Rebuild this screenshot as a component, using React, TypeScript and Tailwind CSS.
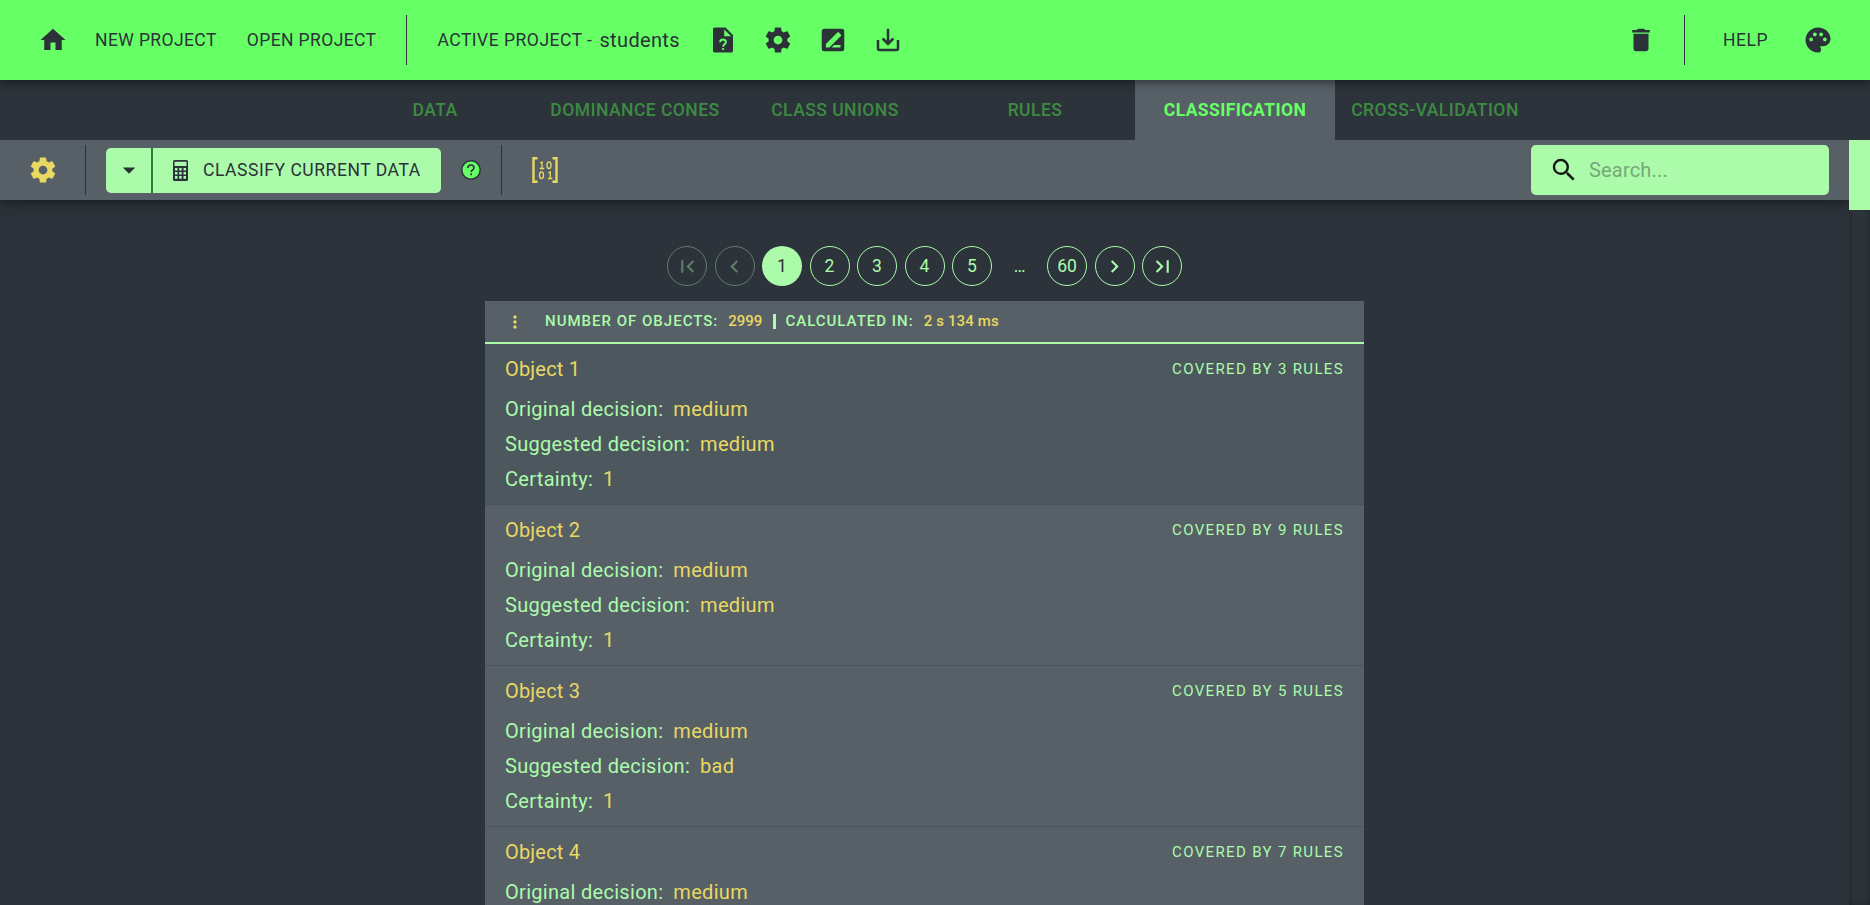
import React from "react";
import {
  MdHome,
  MdSaveAlt,
  MdDelete,
  MdPalette,
  MdSearch,
  MdArrowDropDown,
  MdMoreVert,
  MdNavigateBefore,
  MdNavigateNext,
  MdFirstPage,
  MdLastPage,
} from "react-icons/md";

const GEAR =
  "M19.43 12.98c.04-.32.07-.64.07-.98s-.03-.66-.07-.98l2.11-1.65c.19-.15.24-.42.12-.64l-2-3.46c-.12-.22-.39-.3-.61-.22l-2.49 1c-.52-.4-1.08-.73-1.69-.98l-.38-2.65C14.46 2.18 14.25 2 14 2h-4c-.25 0-.46.18-.49.42l-.38 2.65c-.61.25-1.17.59-1.69.98l-2.49-1c-.23-.09-.49 0-.61.22l-2 3.46c-.13.22-.07.49.12.64l2.11 1.65c-.04.32-.07.65-.07.98s.03.66.07.98l-2.11 1.65c-.19.15-.24.42-.12.64l2 3.46c.12.22.39.3.61.22l2.49-1c.52.4 1.08.73 1.69.98l.38 2.65c.03.24.24.42.49.42h4c.25 0 .46-.18.49-.42l.38-2.65c.61-.25 1.17-.59 1.69-.98l2.49 1c.23.09.49 0 .61-.22l2-3.46c.12-.22.07-.49-.12-.64l-2.11-1.65zM12 15.5c-1.93 0-3.5-1.57-3.5-3.5s1.57-3.5 3.5-3.5 3.5 1.57 3.5 3.5-1.57 3.5-3.5 3.5z";

function GearIcon() {
  return (
    <svg viewBox="0 0 24 24" className="size-[30px] shrink-0 fill-current">
      <path d={GEAR} />
    </svg>
  );
}

function FileQuestionIcon() {
  return (
    <svg viewBox="0 0 24 24" className="size-[30px] shrink-0 fill-current">
      <path
        fillRule="evenodd"
        d="M14 2H5.500C4.600 2 4 2.600 4 3.500v17c0 .9.6 1.500 1.500 1.500h13c.9 0 1.500-.6 1.500-1.500V8l-6-6zM13 3.500V9h5.500L13 3.500z"
      />
      <path
        d="M9.700 13.800c0-1.400 1-2.200 2.300-2.200s2.300.9 2.300 2.100c0 1.600-2.200 1.800-2.200 3.600M12.100 18.300v1.600"
        fill="none"
        stroke="#66ff66"
        strokeWidth="1.500"
      />
    </svg>
  );
}

function RenameIcon() {
  return (
    <svg viewBox="0 0 24 24" className="size-[30px] shrink-0 fill-current">
      <path
        fillRule="evenodd"
        d="M5 3h14a2 2 0 0 1 2 2v14a2 2 0 0 1-2 2H5a2 2 0 0 1-2-2V5c0-1.100.9-2 2-2zM6.300 15.200V18h2.800l8.200-8.200-2.800-2.800-8.200 8.200zM18.400 8.700c.3-.3.3-.7 0-1l-1.800-1.800c-.3-.3-.7-.3-1 0l-1.100 1.100 2.800 2.800 1.100-1.100zM18 16h-5.200l-2 2H18v-2z"
      />
    </svg>
  );
}

function CalculatorIcon() {
  return (
    <svg viewBox="0 0 15 21" className="h-[21px] w-[15px] shrink-0 fill-current">
      <path
        fillRule="evenodd"
        d="M1.500 0h12A1.500 1.500 0 0 1 15 1.500v18a1.500 1.500 0 0 1-1.500 1.500h-12A1.500 1.500 0 0 1 0 19.500v-18A1.500 1.500 0 0 1 1.500 0zM1.500 1.800v4.200h12V1.800zM2 8v2.500h2.500V8zM6.200 8v2.500h2.500V8zM10.500 8v2.500h2.500V8zM2 12v2.500h2.500V12zM6.200 12v2.500h2.500V12zM10.500 12v2.500h2.500V12zM2 16v2.700h2.500V16zM6.200 16v2.700h2.500V16zM10.500 16v2.700h2.500V16z"
      />
    </svg>
  );
}

function HelpBadge() {
  return (
    <svg viewBox="0 0 20 20" className="size-5 shrink-0">
      <circle cx="10" cy="10" r="9.200" fill="#66ff66" stroke="#2b3238" strokeWidth="1.400" />
      <path
        d="M7 7.900c0-1.800 1.300-2.900 3-2.900s3 1.100 3 2.700c0 2.100-2.800 2.200-2.800 4.300M10.200 13.300v1.900"
        fill="none"
        stroke="#2b3238"
        strokeWidth="1.600"
      />
    </svg>
  );
}

function MatrixIcon() {
  return (
    <svg viewBox="0 0 26 26" className="size-[26px] shrink-0" fill="none" stroke="currentColor">
      <path d="M5.500 1.200H1.500V24.800H5.500M20.500 1.200H24.500V24.800H20.500" strokeWidth="2.400" />
      <path
        d="M8 6L10 5V11.500M7.800 11.500H12.200M16.300 15.800L18.300 15V21.500M16 21.500H20.400"
        strokeWidth="1.300"
      />
      <ellipse cx="17" cy="8.200" rx="2" ry="3.300" strokeWidth="1.300" />
      <ellipse cx="9.500" cy="18.200" rx="2" ry="3.300" strokeWidth="1.300" />
    </svg>
  );
}

const tabs = ["Data", "Dominance cones", "Class unions", "Rules", "Classification", "Cross-validation"];

const objects = [
  { id: 1, original: "medium", suggested: "medium", certainty: 1, rules: 3 },
  { id: 2, original: "medium", suggested: "medium", certainty: 1, rules: 9 },
  { id: 3, original: "medium", suggested: "bad", certainty: 1, rules: 5 },
  { id: 4, original: "medium", suggested: "medium", certainty: 1, rules: 7 },
];

function TopBar() {
  return (
    <header className="relative z-20 flex h-20 shrink-0 items-center bg-[#66ff66] pl-[38px] pr-[37px] text-[17.5px] tracking-[0.4px] text-[#2b3238] shadow-[0_3px_5px_-1px_rgba(0,0,0,0.2),0_5px_8px_rgba(0,0,0,0.14),0_1px_14px_rgba(0,0,0,0.12)]">
      <MdHome className="size-[30px]" />
      <span className="ml-[27px]">NEW PROJECT</span>
      <span className="ml-[30px]">OPEN PROJECT</span>
      <div className="ml-[30px] h-[50px] w-px bg-[#2b3238]" />
      <span className="ml-[30px] tracking-[0.5px]">ACTIVE PROJECT -</span>
      <span className="ml-[7px] text-[20px] tracking-[0.35px]">students</span>
      <div className="ml-7 flex gap-[25px]">
        <FileQuestionIcon />
        <GearIcon />
        <RenameIcon />
        <MdSaveAlt className="size-[30px]" />
      </div>
      <MdDelete className="ml-auto size-[30px]" />
      <div className="ml-[28px] h-[50px] w-px bg-[#2b3238]" />
      <span className="ml-[38px] tracking-[0.5px]">HELP</span>
      <MdPalette className="ml-[35px] size-[30px]" />
    </header>
  );
}

function TabBar() {
  return (
    <nav className="flex h-[60px] shrink-0 justify-center">
      {tabs.map((tab) => (
        <div
          key={tab}
          className={
            tab === "Classification"
              ? "flex w-[200px] items-center justify-center bg-[#566066] text-[17.5px] font-bold uppercase tracking-[0.4px] text-[#66ff66]"
              : "flex w-[200px] items-center justify-center whitespace-nowrap text-[17.5px] font-medium uppercase tracking-[0.46px] text-[#3d8b42]"
          }
        >
          {tab}
        </div>
      ))}
    </nav>
  );
}

function Toolbar() {
  return (
    <div className="relative z-10 flex h-[60px] shrink-0 items-center bg-[#566066] pl-7 pr-5 shadow-[0_3px_5px_-1px_rgba(0,0,0,0.2),0_6px_10px_rgba(0,0,0,0.14),0_1px_18px_rgba(0,0,0,0.12)]">
      <div className="text-[#e9d862]">
        <GearIcon />
      </div>
      <div className="ml-[27px] h-[50px] w-px bg-[#2b3238]" />
      <div className="ml-5 flex h-[45px] w-[335px] overflow-hidden rounded-[5px] bg-[#abfbab] text-[#2b3238]">
        <div className="flex w-[47px] items-center justify-center border-r-2 border-[#2e7d32]">
          <MdArrowDropDown className="size-[30px]" />
        </div>
        <div className="flex items-center pl-5">
          <CalculatorIcon />
          <span className="ml-[15px] whitespace-nowrap text-[17.5px] tracking-[0.55px]">CLASSIFY CURRENT DATA</span>
        </div>
      </div>
      <div className="ml-5">
        <HelpBadge />
      </div>
      <div className="ml-5 h-[50px] w-px bg-[#2b3238]" />
      <div className="ml-[30px] text-[#e9d862]">
        <MatrixIcon />
      </div>
      <div className="ml-auto flex h-[50px] w-[298px] items-center rounded-[5px] bg-[#abfbab] pl-[18px]">
        <MdSearch className="size-[30px] text-[#111911]" />
        <span className="ml-[10px] text-[20px] tracking-[0.19px] text-[#76a878]">Search...</span>
      </div>
    </div>
  );
}

const pageItem =
  "flex size-10 items-center justify-center rounded-full border border-[#abfbab] text-[17.5px] text-[#abfbab]";
const pageItemOff =
  "flex size-10 items-center justify-center rounded-full border border-[#abfbab] text-[#abfbab] opacity-[0.38]";

function Pager() {
  return (
    <div className="mt-[46px] flex justify-center gap-[7.500px]">
      <div className={pageItemOff}>
        <MdFirstPage className="size-[25px]" />
      </div>
      <div className={pageItemOff}>
        <MdNavigateBefore className="size-[25px]" />
      </div>
      <div className="flex size-10 items-center justify-center rounded-full bg-[#abfbab] text-[17.5px] text-[#2b3238]">
        1
      </div>
      {[2, 3, 4, 5].map((n) => (
        <div key={n} className={pageItem}>
          {n}
        </div>
      ))}
      <div className="flex size-10 items-center justify-center text-[17.5px] text-[#abfbab]">…</div>
      <div className={pageItem}>60</div>
      <div className={pageItem}>
        <MdNavigateNext className="size-[25px]" />
      </div>
      <div className={pageItem}>
        <MdLastPage className="size-[25px]" />
      </div>
    </div>
  );
}

function Field({ label, value }: { label: string; value: string | number }) {
  return (
    <div className="flex h-[35px] items-center gap-[10px] tracking-[0.3px]">
      <span>{label}:</span>
      <span className="text-[#e9d862]">{value}</span>
    </div>
  );
}

function Results() {
  return (
    <section className="mx-auto mt-[15px] w-[879px] text-[#abfbab]">
      <div className="flex h-[43px] items-center border-b-2 border-[#abfbab] bg-[#566066] pl-5 text-[15px] font-medium">
        <MdMoreVert className="size-5 text-[#e9d862]" />
        <span className="ml-5 tracking-[1px]">NUMBER OF OBJECTS:</span>
        <span className="ml-[10px] text-[#e9d862]">2999</span>
        <div className="ml-[11px] h-[15px] w-[3px] bg-[#abfbab]" />
        <span className="ml-[9px] tracking-[1px]">CALCULATED IN:</span>
        <span className="ml-[10px] tracking-[0.15px] text-[#e9d862]">2 s 134 ms</span>
      </div>
      {objects.map((o) => (
        <article
          key={o.id}
          className={
            o.id === 1
              ? "h-[161px] border-b border-[#4a545a] bg-[#4d585e] px-5 pt-[5px] text-[20px] tracking-[0.19px]"
              : "h-[161px] border-b border-[#4a545a] bg-[#566066] px-5 pt-[5px] text-[20px] tracking-[0.19px]"
          }
        >
          <div className="mb-[2px] flex h-10 items-center justify-between">
            <span className="text-[#e9d862]">Object {o.id}</span>
            <span className="text-[15px] tracking-[1.35px]">COVERED BY {o.rules} RULES</span>
          </div>
          <Field label="Original decision" value={o.original} />
          <Field label="Suggested decision" value={o.suggested} />
          <Field label="Certainty" value={o.certainty} />
        </article>
      ))}
    </section>
  );
}

export default function App() {
  return (
    <div className="flex h-[905px] flex-col overflow-hidden bg-[#2c333a] font-[Roboto,sans-serif] leading-normal">
      <TopBar />
      <TabBar />
      <div className="flex min-h-0 flex-1">
        <main className="flex min-w-0 flex-1 flex-col overflow-hidden">
          <Toolbar />
          <Pager />
          <Results />
        </main>
        <div className="w-[21px] shrink-0 bg-[#2c333a] shadow-[inset_0_0_6px_rgba(0,0,0,0.3)]">
          <div className="h-[70px] bg-[#abfbab]" />
        </div>
      </div>
    </div>
  );
}
